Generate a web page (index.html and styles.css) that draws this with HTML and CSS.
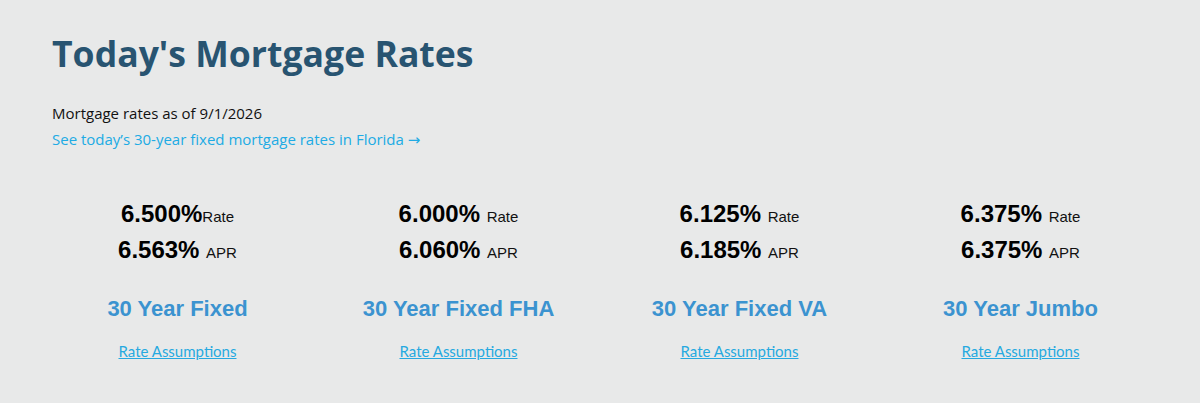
FILE: index.html
```html
<!DOCTYPE html>
<html lang="en">
<head>
<meta charset="utf-8">
<title>Today's Mortgage Rates</title>
<link rel="stylesheet" href="styles.css">
</head>
<body>
<main class="wrap">
  <header class="intro">
    <h1 class="title">Today's Mortgage Rates</h1>
    <p class="asof">Mortgage rates as of 9/1/2026</p>
    <a class="state-link" href="#">See today’s 30-year fixed mortgage rates in Florida <span class="arrow">→</span></a>
  </header>
  <section class="rates">
    <div class="rate-card">
      <div class="figures">
        <div class="line"><span class="num">6.500%</span><span class="lbl">Rate</span></div>
        <div class="line"><span class="num">6.563%</span> <span class="lbl">APR</span></div>
      </div>
      <h2 class="product">30 Year Fixed</h2>
      <a class="assume" href="#">Rate Assumptions</a>
    </div>
    <div class="rate-card">
      <div class="figures">
        <div class="line"><span class="num">6.000%</span> <span class="lbl">Rate</span></div>
        <div class="line"><span class="num">6.060%</span> <span class="lbl">APR</span></div>
      </div>
      <h2 class="product">30 Year Fixed FHA</h2>
      <a class="assume" href="#">Rate Assumptions</a>
    </div>
    <div class="rate-card">
      <div class="figures">
        <div class="line"><span class="num">6.125%</span> <span class="lbl">Rate</span></div>
        <div class="line"><span class="num">6.185%</span> <span class="lbl">APR</span></div>
      </div>
      <h2 class="product">30 Year Fixed VA</h2>
      <a class="assume" href="#">Rate Assumptions</a>
    </div>
    <div class="rate-card">
      <div class="figures">
        <div class="line"><span class="num">6.375%</span> <span class="lbl">Rate</span></div>
        <div class="line"><span class="num">6.375%</span> <span class="lbl">APR</span></div>
      </div>
      <h2 class="product">30 Year Jumbo</h2>
      <a class="assume" href="#">Rate Assumptions</a>
    </div>
  </section>
</main>
</body>
</html>
```
FILE: styles.css
```css
html, body {
  margin: 0;
  padding: 0;
}
body {
  background: #e8e9e9;
  font-family: "Open Sans", "Liberation Sans", sans-serif;
  color: #111;
  height: 403px;
  overflow: hidden;
}
.wrap {
  width: 1124px;
  padding: 32px 0 0 37px;
}
.intro {
  padding-left: 15px;
}
.title {
  margin: 0;
  font-family: "Open Sans", sans-serif;
  font-weight: 700;
  font-size: 35.6px;
  line-height: 43px;
  color: #285471;
}
.asof {
  margin: 28px 0 0;
  font-size: 15px;
  line-height: 20px;
  color: #111;
}
.state-link {
  display: block;
  margin-top: 6px;
  font-size: 15px;
  line-height: 20px;
  color: #20abe4;
  text-decoration: none;
}
.arrow {
  font-family: "DejaVu Sans", sans-serif;
  font-size: 15px;
  line-height: 16px;
}
.rates {
  display: grid;
  grid-template-columns: repeat(4, 1fr);
  margin-top: 47px;
}
.rate-card {
  text-align: center;
  font-family: "Liberation Sans", Arial, sans-serif;
}
.figures {
  font-size: 24px;
  line-height: 36px;
}
.num {
  font-weight: 700;
  color: #000;
}
.lbl {
  font-size: 15px;
  line-height: 16px;
  color: #111;
}
.product {
  margin: 26px 0 0;
  font-size: 22px;
  line-height: 30px;
  font-weight: 700;
  color: #3b93d0;
}
.assume {
  display: block;
  margin-top: 17px;
  font-family: "Lato", sans-serif;
  font-size: 15px;
  line-height: 20px;
  color: #26a9e0;
  text-decoration: underline;
}
```
